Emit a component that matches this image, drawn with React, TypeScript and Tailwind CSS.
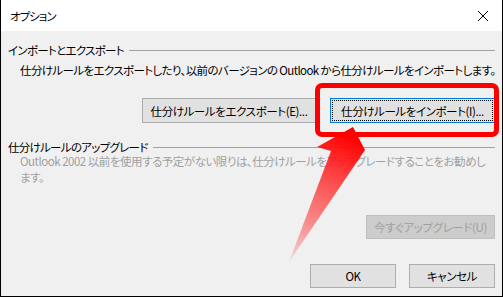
import React from 'react'

function CloseIcon() {
  return (
    <svg width="12" height="12" viewBox="0 0 12 12" className="block">
      <path d="M1 1 L11 11 M11 1 L1 11" stroke="#000" strokeWidth="1" />
    </svg>
  )
}

function GroupHeader({ title, tight }: { title: string; tight?: boolean }) {
  return (
    <div className={tight ? 'flex items-center h-[12px] leading-[12px]' : 'flex items-center h-[14px] leading-[14px]'}>
      <span className="shrink-0 text-black tracking-[-0.7px]">{title}</span>
      <div className="flex-1 ml-[5px] border-t border-[#a0a0a0]" />
    </div>
  )
}

export default function App() {
  return (
    <div
      className="relative w-[503px] h-[297px] overflow-hidden border-l border-r border-b border-black bg-[#f0f0f0] text-[11.5px] tracking-[-0.4px] text-black [font-family:'Noto_Sans_CJK_JP','Noto_Sans',sans-serif] [font-feature-settings:'palt']"
    >
      {/* title bar */}
      <div className="flex items-center justify-between h-[31px] bg-white pl-[9px] pr-[13px]">
        <span className="leading-[14px] tracking-[-1px]">オプション</span>
        <CloseIcon />
      </div>

      <div className="flex flex-col pl-[7px] pr-[7px] pt-[12px]">
        <GroupHeader title="インポートとエクスポート" />
        <p className="ml-[12px] mt-[6px] leading-[14px] whitespace-nowrap tracking-[-0.6px]">
          仕分けルールをエクスポートしたり、以前のバージョンの Outlook から仕分けルールをインポートします。
        </p>

        <div className="flex justify-end gap-[14px] mt-[21px]">
          <button className="w-[174px] h-[25px] border border-[#adadad] bg-[#e1e1e1] leading-[14px] whitespace-nowrap">
            仕分けルールをエクスポート(E)...
          </button>
          <button className="w-[165px] h-[25px] border border-[#0078d7] bg-[#e1e1e1] p-px">
            <span className="flex items-center justify-center w-full h-full border border-dotted border-black leading-[14px] whitespace-nowrap">
              仕分けルールをインポート(I)...
            </span>
          </button>
        </div>

        <div className="mt-[18px]">
          <GroupHeader title="仕分けルールのアップグレード" tight />
        </div>
        <p className="ml-[12px] leading-[16px] text-[#a0a0a0] whitespace-nowrap tracking-[-0.48px]">
          Outlook 2002 以前を使用する予定がない限りは、仕分けルールをアップグレードすることをお勧めし
          <br />
          ます。
        </p>

        <div className="flex justify-end mt-[30px]">
          <button className="w-[129px] h-[24px] border border-[#bfbfbf] bg-[#cccccc] text-[#a0a0a0] leading-[14px] whitespace-nowrap">
            今すぐアップグレード(U)
          </button>
        </div>

        <div className="flex justify-end gap-[13px] mt-[25px]">
          <button className="w-[86px] h-[24px] border border-[#adadad] bg-[#e1e1e1] leading-[14px]">OK</button>
          <button className="w-[86px] h-[24px] border border-[#adadad] bg-[#e1e1e1] leading-[14px]">キャンセル</button>
        </div>
      </div>

      {/* annotation: highlight box */}
      <div className="absolute left-[314px] top-[83px] w-[184px] h-[54px] border-[5px] border-[#ff0000] rounded-[7px]" />

      {/* annotation: arrow */}
      <svg className="absolute left-0 top-0 pointer-events-none" width="503" height="297" viewBox="0 0 503 297">
        <defs>
          <linearGradient id="arrowFade" x1="288" y1="262" x2="345" y2="135" gradientUnits="userSpaceOnUse">
            <stop offset="0" stopColor="#ff0000" stopOpacity="0.08" />
            <stop offset="0.45" stopColor="#ff3030" stopOpacity="0.65" />
            <stop offset="1" stopColor="#ff0000" stopOpacity="1" />
          </linearGradient>
        </defs>
        <polygon points="352,127 364,150 288,262 330,151 316,147" fill="url(#arrowFade)" />
      </svg>
    </div>
  )
}
